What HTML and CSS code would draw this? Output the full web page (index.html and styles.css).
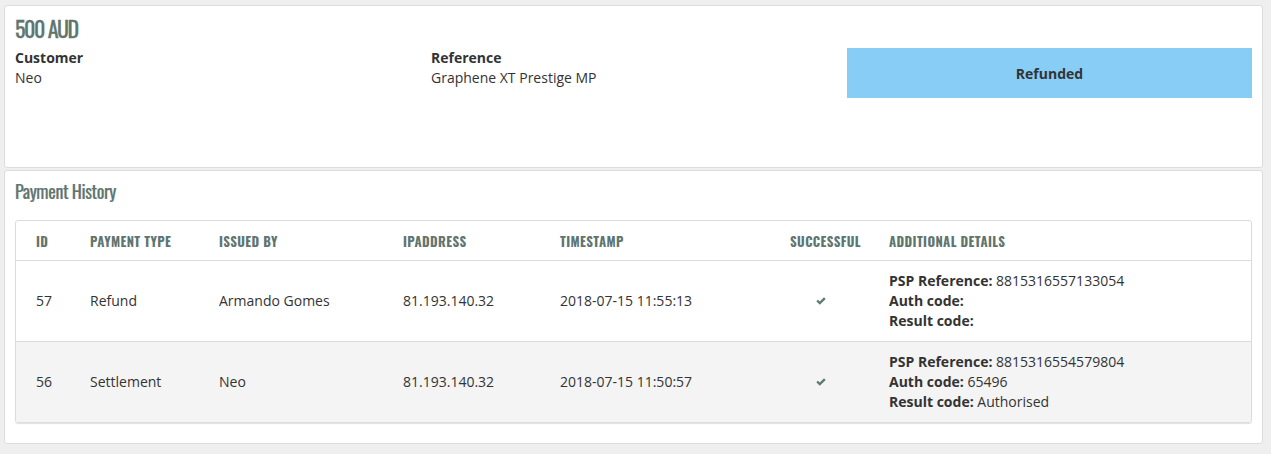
FILE: index.html
```html
<!DOCTYPE html>
<html>
<head>
<meta charset="utf-8">
<link rel="stylesheet" href="styles.css">
</head>
<body>
<section class="card summary">
  <h1 class="amount">500 AUD</h1>
  <div class="summary-grid">
    <div class="field">
      <div class="label">Customer</div>
      <div class="value">Neo</div>
    </div>
    <div class="field">
      <div class="label">Reference</div>
      <div class="value">Graphene XT Prestige MP</div>
    </div>
    <div class="status">Refunded</div>
  </div>
</section>
<section class="card history">
  <h2 class="section-title">Payment History</h2>
  <div class="table-wrap">
    <table class="history-table">
      <colgroup>
        <col class="c-id"><col class="c-type"><col class="c-issued"><col class="c-ip"><col class="c-ts"><col class="c-ok"><col class="c-details">
      </colgroup>
      <thead>
        <tr>
          <th>ID</th><th>Payment Type</th><th>Issued By</th><th>IPAddress</th><th>Timestamp</th><th>Successful</th><th>Additional Details</th>
        </tr>
      </thead>
      <tbody>
        <tr>
          <td>57</td><td>Refund</td><td>Armando Gomes</td><td>81.193.140.32</td><td>2018-07-15 11:55:13</td>
          <td class="ok"><svg class="check" width="10" height="8" viewBox="0 0 10 8"><path d="M0.3 4.3 L1.9 2.7 L3.8 4.5 L8 0.3 L9.7 1.9 L3.8 7.7 Z" fill="#5f7b71"/></svg></td>
          <td class="details"><b>PSP Reference:</b> 8815316557133054<br><b>Auth code:</b><br><b>Result code:</b></td>
        </tr>
        <tr class="alt">
          <td>56</td><td>Settlement</td><td>Neo</td><td>81.193.140.32</td><td>2018-07-15 11:50:57</td>
          <td class="ok"><svg class="check" width="10" height="8" viewBox="0 0 10 8"><path d="M0.3 4.3 L1.9 2.7 L3.8 4.5 L8 0.3 L9.7 1.9 L3.8 7.7 Z" fill="#5f7b71"/></svg></td>
          <td class="details"><b>PSP Reference:</b> 8815316554579804<br><b>Auth code:</b> 65496<br><b>Result code:</b> Authorised</td>
        </tr>
      </tbody>
    </table>
  </div>
</section>
</body>
</html>
```
FILE: styles.css
```css
html, body {
  margin: 0;
  background: #efefef;
}
body {
  padding: 5px 8px 10px 4px;
  font-family: "Open Sans", "Liberation Sans", sans-serif;
  font-size: 14px;
  color: #333;
}
.card {
  background: #fff;
  border: 1px solid #dcdcdc;
  border-radius: 3px;
  box-sizing: border-box;
}
.summary {
  height: 163px;
  padding: 8px 10px 0 10px;
}
.amount {
  margin: 0;
  font-family: "Oswald", "Liberation Sans Narrow", "DejaVu Sans Condensed", sans-serif;
  font-weight: normal;
  font-size: 22px;
  line-height: 28px;
  color: #5f7570;
  letter-spacing: -1.4px;
  -webkit-text-stroke: 0.3px #5f7570;
}
.summary-grid {
  display: grid;
  grid-template-columns: 416px 416px 405px;
  margin-top: 6px;
}
.label {
  font-weight: bold;
  line-height: 20px;
}
.value {
  line-height: 20px;
}
.status {
  height: 50px;
  background: #88cdf6;
  display: flex;
  align-items: center;
  justify-content: center;
  font-weight: bold;
}
.history {
  margin-top: 2px;
  height: 274px;
  padding: 9px 10px 0 10px;
}
.section-title {
  margin: 0;
  font-family: "Oswald", "Liberation Sans Narrow", "DejaVu Sans Condensed", sans-serif;
  font-weight: normal;
  font-size: 18px;
  line-height: 22px;
  color: #5f7570;
  letter-spacing: -0.4px;
  -webkit-text-stroke: 0.2px #5f7570;
}
.table-wrap {
  margin-top: 18px;
  border: 1px solid #dcdcdc;
  border-radius: 3px;
  overflow: hidden;
  box-shadow: 0 1px 1px rgba(0,0,0,0.12);
}
.history-table {
  width: 100%;
  border-collapse: collapse;
  table-layout: fixed;
}
.c-id { width: 54px; }
.c-type { width: 129px; }
.c-issued { width: 184px; }
.c-ip { width: 157px; }
.c-ts { width: 230px; }
.c-ok { width: 99px; }
.history-table th {
  text-align: left;
  padding: 0 0 0 20px;
  height: 39px;
  font-family: "Oswald", "Liberation Sans Narrow", "DejaVu Sans Condensed", sans-serif;
  font-weight: bold;
  font-size: 13px;
  letter-spacing: 0.4px;
  text-transform: uppercase;
  color: #5f7570;
  border-bottom: 1px solid #dcdcdc;
}
.history-table td {
  padding: 10px 0 10px 20px;
  line-height: 20px;
  vertical-align: middle;
}
.history-table tbody tr + tr td {
  border-top: 1px solid #dcdcdc;
}
.history-table tr.alt td {
  background: #f4f4f4;
}
.history-table td.ok {
  padding-left: 46px;
}
.check {
  display: block;
}
.details b {
  font-weight: bold;
}
```
